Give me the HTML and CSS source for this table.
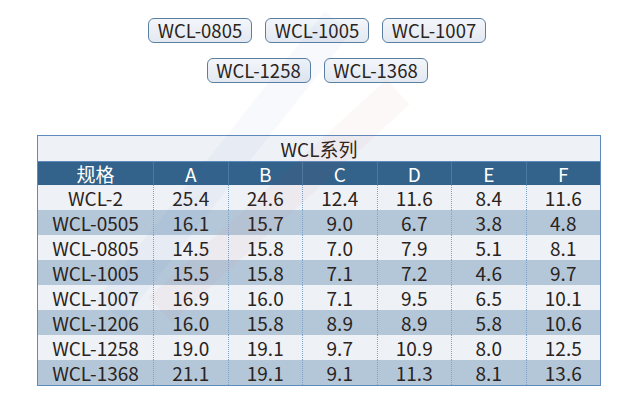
FILE: index.html
```html
<!DOCTYPE html>
<html lang="zh">
<head>
<meta charset="utf-8">
<title>WCL系列</title>
<link rel="stylesheet" href="styles.css">
</head>
<body>
<div class="page">
  <div class="tags">
    <div class="tag-row">
      <span class="tag">WCL-0805</span>
      <span class="tag">WCL-1005</span>
      <span class="tag">WCL-1007</span>
    </div>
    <div class="tag-row">
      <span class="tag">WCL-1258</span>
      <span class="tag">WCL-1368</span>
    </div>
  </div>
  <table class="spec">
    <colgroup>
      <col class="c-first"><col class="c-n"><col class="c-n"><col class="c-n"><col class="c-n"><col class="c-n"><col class="c-n">
    </colgroup>
    <thead>
      <tr class="title"><th colspan="7">WCL系列</th></tr>
      <tr class="head"><th>规格</th><th>A</th><th>B</th><th>C</th><th>D</th><th>E</th><th>F</th></tr>
    </thead>
    <tbody>
      <tr><td>WCL-2</td><td>25.4</td><td>24.6</td><td>12.4</td><td>11.6</td><td>8.4</td><td>11.6</td></tr>
      <tr><td>WCL-0505</td><td>16.1</td><td>15.7</td><td>9.0</td><td>6.7</td><td>3.8</td><td>4.8</td></tr>
      <tr><td>WCL-0805</td><td>14.5</td><td>15.8</td><td>7.0</td><td>7.9</td><td>5.1</td><td>8.1</td></tr>
      <tr><td>WCL-1005</td><td>15.5</td><td>15.8</td><td>7.1</td><td>7.2</td><td>4.6</td><td>9.7</td></tr>
      <tr><td>WCL-1007</td><td>16.9</td><td>16.0</td><td>7.1</td><td>9.5</td><td>6.5</td><td>10.1</td></tr>
      <tr><td>WCL-1206</td><td>16.0</td><td>15.8</td><td>8.9</td><td>8.9</td><td>5.8</td><td>10.6</td></tr>
      <tr><td>WCL-1258</td><td>19.0</td><td>19.1</td><td>9.7</td><td>10.9</td><td>8.0</td><td>12.5</td></tr>
      <tr><td>WCL-1368</td><td>21.1</td><td>19.1</td><td>9.1</td><td>11.3</td><td>8.1</td><td>13.6</td></tr>
    </tbody>
  </table>
  <svg class="watermark" width="634" height="409" viewBox="0 0 634 409" aria-hidden="true">
    <line x1="338" y1="22" x2="110" y2="310" stroke="#3b6fd0" stroke-width="34"/>
    <line x1="398" y1="92" x2="160" y2="310" stroke="#e0403a" stroke-width="34"/>
  </svg>
</div>
</body>
</html>
```
FILE: styles.css
```css
html, body {
  margin: 0;
  padding: 0;
  background: #ffffff;
}
.page {
  position: relative;
  width: 634px;
  height: 409px;
  overflow: hidden;
  font-family: "Noto Sans CJK SC", "Noto Sans", sans-serif;
  color: #2a2320;
}
.tags {
  padding-top: 18px;
  display: flex;
  flex-direction: column;
  align-items: center;
  gap: 15px;
}
.tag-row {
  display: flex;
  gap: 13px;
  justify-content: center;
}
.tag {
  box-sizing: border-box;
  height: 25px;
  width: 104px;
  display: flex;
  align-items: center;
  justify-content: center;
  border: 1.5px solid #5a7fa3;
  border-radius: 6px;
  background: linear-gradient(#f3f6fa, #e3e9f1);
  font-size: 18.5px;
  line-height: 1;
  color: #2a2320;
}
.spec {
  margin: 52px 0 0 37px;
  width: 563px;
  border-collapse: collapse;
  table-layout: fixed;
  border: 1.5px solid #5d8bbd;
  font-size: 19px;
}
.c-first { width: 116px; }
.c-n { width: 74.5px; }
.spec th, .spec td {
  padding: 0;
  text-align: center;
  font-weight: normal;
  line-height: 1;
}
.title th {
  height: 25px;
  background: #eef1f6;
  color: #2a2320;
  border-bottom: 1.5px solid #5d8bbd;
}
.head th {
  height: 23px;
  background: #33628a;
  color: #ffffff;
  border-left: 1px solid #4b7aa1;
}
.head th:first-child { border-left: none; }
.spec td {
  height: 25px;
  border-left: 1px dotted #7fa4cc;
}
.spec td:first-child { border-left: none; }
.spec tbody tr:nth-child(odd) td { background: #eef1f6; }
.spec tbody tr:nth-child(even) td { background: #b4c7d9; }
.watermark {
  position: absolute;
  left: 0;
  top: 0;
  opacity: 0.03;
  pointer-events: none;
}
```
